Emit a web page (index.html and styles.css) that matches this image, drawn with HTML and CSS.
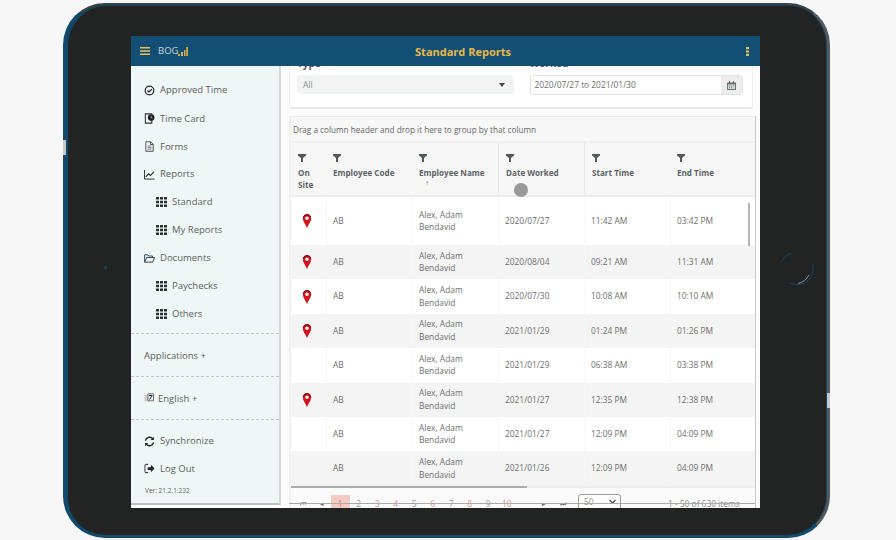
FILE: index.html
```html
<!DOCTYPE html>
<html lang="en">
<head>
<meta charset="utf-8">
<title>Standard Reports</title>
<link rel="stylesheet" href="styles.css">
</head>
<body>
<svg class="defs" width="0" height="0" aria-hidden="true">
  <symbol id="i-th" viewBox="0 0 11 10"><path d="M0 0h3v2.6H0zM4 0h3v2.6H4zM8 0h3v2.6H8zM0 3.7h3v2.6H0zM4 3.7h3v2.6H4zM8 3.7h3v2.6H8zM0 7.4h3V10H0zM4 7.4h3V10H4zM8 7.4h3V10H8z"/></symbol>
  <symbol id="i-funnel" viewBox="0 0 9 9"><path d="M0 0h9v1.8L5.6 4.4V9H3.4V4.4L0 1.8z"/></symbol>
  <symbol id="i-pin" viewBox="0 0 10 14"><path fill-rule="evenodd" fill="#d0131c" d="M5 0a4.2 4.2 0 0 1 4.2 4.3C9.200 7.500 6.300 10.500 5 14 3.700 10.500 .8 7.500 .8 4.300A4.200 4.200 0 0 1 5 0zm0 2.500a1.800 1.800 0 1 0 0 3.600 1.800 1.800 0 0 0 0-3.600z"/><path fill="none" stroke="#3b1416" stroke-width=".8" d="M1.300 3.400A3.900 3.900 0 0 1 8.700 3.400"/></symbol>
</svg>

<div class="tablet">
  <span class="side-mark side-left"></span>
  <span class="side-mark side-right"></span>
  <span class="camera"></span>
  <svg class="home" width="36" height="36" viewBox="0 0 36 36" aria-hidden="true">
    <path d="M2.500 12A16 16 0 0 1 12 3.500" fill="none" stroke="#12496c" stroke-width="1"/>
    <path d="M33.500 14A16 16 0 0 1 11 33" fill="none" stroke="#12496c" stroke-width="1"/>
    <path d="M30 25A16 16 0 0 1 19 33.500" fill="none" stroke="#8a8f92" stroke-width="1"/>
  </svg>

  <div class="screen">
    <header class="topbar">
      <div class="brand">
        <svg class="burger" width="10" height="8" viewBox="0 0 10 8" aria-hidden="true"><path d="M0 0h10v1.600H0zM0 3.200h10v1.600H0zM0 6.400h10V8H0z"/></svg>
        <span class="brand-name">BOG</span>
        <svg class="brand-bars" width="10" height="9" viewBox="0 0 10 9" aria-hidden="true"><path d="M0 7h2v2H0zM3 5h2v4H3zM6 3h1.500v6H6zM8.300 0H10v9H8.300z"/></svg>
      </div>
      <h1 class="title">Standard Reports</h1>
      <svg class="kebab" width="3" height="9" viewBox="0 0 3 9" aria-hidden="true"><path d="M0 0h3v2.200H0zM0 3.400h3v2.200H0zM0 6.800h3V9H0z"/></svg>
    </header>

    <div class="body">
      <nav class="sidebar">
        <div class="nav-cut"><span>Types</span></div>
        <ul class="nav">
          <li class="nav-row"><svg class="ico" viewBox="0 0 12 12"><circle cx="6" cy="6" r="4.700" fill="none" stroke="#222" stroke-width="1.300"/><path d="M3.800 6l1.600 1.600 3-3" fill="none" stroke="#222" stroke-width="1.300"/></svg>Approved Time</li>
          <li class="nav-row nav-tall"><svg class="ico" viewBox="0 0 12 12"><path d="M1.500 1h7v10h-7z" fill="none" stroke="#333" stroke-width="1.200"/><circle cx="7.800" cy="5" r="3.600" fill="#222"/><path d="M7.800 3.200V5l1.300.8" fill="none" stroke="#fff" stroke-width=".7"/></svg>Time Card</li>
          <li class="nav-row nav-short"><svg class="ico" viewBox="0 0 12 12"><path d="M2 .8h5.200L10 3.600v7.600H2zM7 1v2.800h3" fill="none" stroke="#444" stroke-width="1"/><path d="M4 5.500h4M4 7.200h4M4 8.900h4" stroke="#555" stroke-width=".8"/></svg>Forms</li>
          <li class="nav-row"><svg class="ico" viewBox="0 0 12 12"><path d="M.6 1v10h11" fill="none" stroke="#222" stroke-width="1"/><path d="M2 8.500l3-3.200 2 1.800 3.800-4" fill="none" stroke="#222" stroke-width="1.200"/></svg>Reports</li>
          <li class="nav-row nav-sub"><svg class="ico-th"><use href="#i-th"/></svg>Standard</li>
          <li class="nav-row nav-sub"><svg class="ico-th"><use href="#i-th"/></svg>My Reports</li>
          <li class="nav-row"><svg class="ico" viewBox="0 0 12 12"><path d="M.7 10V2h3.500l1 1.300h4V5" fill="none" stroke="#12496c" stroke-width="1"/><path d="M.8 10l2-5h8.700l-2 5z" fill="none" stroke="#333" stroke-width="1"/></svg>Documents</li>
          <li class="nav-row nav-sub"><svg class="ico-th"><use href="#i-th"/></svg>Paychecks</li>
          <li class="nav-row nav-sub"><svg class="ico-th"><use href="#i-th"/></svg>Others</li>
        </ul>
        <div class="nav-block nav-apps">Applications +</div>
        <div class="nav-block nav-lang"><svg class="ico-lang" viewBox="0 0 10 10"><path d="M.5 1.500h5v7h-5z" fill="#ccc"/><path d="M4 .8h5.500v7H4z" fill="#e8eeee" stroke="#444" stroke-width=".7"/><path d="M5 2.500h3.500M6.700 2v1M5.500 6.500l2.500-3.500" stroke="#123" stroke-width=".9" fill="none"/></svg>English +</div>
        <ul class="nav nav-foot">
          <li class="nav-row"><svg class="ico" viewBox="0 0 12 12"><path d="M1.500 5A4.600 4.600 0 0 1 9.500 3M10.500 7A4.600 4.600 0 0 1 2.500 9" fill="none" stroke="#222" stroke-width="1.500"/><path d="M10.800.8v3.600H7.200zM1.200 11.200V7.600h3.600z" fill="#222"/></svg>Synchronize</li>
          <li class="nav-row nav-short"><svg class="ico" viewBox="0 0 12 12"><path d="M4.500 1.500H2.500A1.500 1.500 0 0 0 1 3v6a1.500 1.500 0 0 0 1.500 1.500h2" fill="none" stroke="#444" stroke-width="1.100"/><path d="M4 4.500h3.500V2L11.500 6 7.500 10V7.500H4z" fill="#222"/></svg>Log Out</li>
        </ul>
        <div class="version">Ver: 21.2.1.232</div>
      </nav>

      <main class="main">
        <section class="filters">
          <div class="field field-type">
            <label class="field-label">Type</label>
            <div class="select"><span>All</span><span class="caret"></span></div>
          </div>
          <div class="field field-date">
            <label class="field-label">Worked</label>
            <div class="date">
              <span class="date-text">2020/07/27 to 2021/01/30</span>
              <span class="date-btn"><svg width="9" height="9" viewBox="0 0 9 9" aria-hidden="true"><path d="M0 1.500h9V9H0z" fill="#6d7478"/><path d="M1 3.500h7V8H1z" fill="#d9dcdd"/><path d="M2 .3h1v2H2zM6 .3h1v2H6z" fill="#444"/><path d="M2 4.500h1v1H2zM4 4.500h1v1H4zM6 4.500h1v1H6zM2 6.300h1v1H2zM4 6.300h1v1H4z" fill="#6d7478"/></svg></span>
            </div>
          </div>
        </section>

        <section class="grid">
          <div class="group-panel">Drag a column header and drop it here to group by that column</div>
          <div class="head row-cols">
            <div class="hcell"><svg class="funnel"><use href="#i-funnel"/></svg><span>On<br>Site</span></div>
            <div class="hcell"><svg class="funnel"><use href="#i-funnel"/></svg><span>Employee Code</span></div>
            <div class="hcell"><svg class="funnel"><use href="#i-funnel"/></svg><span>Employee Name</span><span class="sort">↑</span></div>
            <div class="hcell hcell-line"><svg class="funnel"><use href="#i-funnel"/></svg><span>Date Worked</span></div>
            <div class="hcell hcell-line"><svg class="funnel"><use href="#i-funnel"/></svg><span>Start Time</span></div>
            <div class="hcell"><svg class="funnel"><use href="#i-funnel"/></svg><span>End Time</span></div>
          </div>
          <div class="rows">
            <div class="row row-cols row-first"><div class="cell cell-pin"><svg class="pin"><use href="#i-pin"/></svg></div><div class="cell">AB</div><div class="cell">Alex, Adam<br>Bendavid</div><div class="cell">2020/07/27</div><div class="cell">11:42 AM</div><div class="cell">03:42 PM</div></div>
            <div class="row row-cols row-alt"><div class="cell cell-pin"><svg class="pin"><use href="#i-pin"/></svg></div><div class="cell">AB</div><div class="cell">Alex, Adam<br>Bendavid</div><div class="cell">2020/08/04</div><div class="cell">09:21 AM</div><div class="cell">11:31 AM</div></div>
            <div class="row row-cols"><div class="cell cell-pin"><svg class="pin"><use href="#i-pin"/></svg></div><div class="cell">AB</div><div class="cell">Alex, Adam<br>Bendavid</div><div class="cell">2020/07/30</div><div class="cell">10:08 AM</div><div class="cell">10:10 AM</div></div>
            <div class="row row-cols row-alt"><div class="cell cell-pin"><svg class="pin"><use href="#i-pin"/></svg></div><div class="cell">AB</div><div class="cell">Alex, Adam<br>Bendavid</div><div class="cell">2021/01/29</div><div class="cell">01:24 PM</div><div class="cell">01:26 PM</div></div>
            <div class="row row-cols"><div class="cell cell-pin"></div><div class="cell">AB</div><div class="cell">Alex, Adam<br>Bendavid</div><div class="cell">2021/01/29</div><div class="cell">06:38 AM</div><div class="cell">03:38 PM</div></div>
            <div class="row row-cols row-alt"><div class="cell cell-pin"><svg class="pin"><use href="#i-pin"/></svg></div><div class="cell">AB</div><div class="cell">Alex, Adam<br>Bendavid</div><div class="cell">2021/01/27</div><div class="cell">12:35 PM</div><div class="cell">12:38 PM</div></div>
            <div class="row row-cols"><div class="cell cell-pin"></div><div class="cell">AB</div><div class="cell">Alex, Adam<br>Bendavid</div><div class="cell">2021/01/27</div><div class="cell">12:09 PM</div><div class="cell">04:09 PM</div></div>
            <div class="row row-cols row-alt"><div class="cell cell-pin"></div><div class="cell">AB</div><div class="cell">Alex, Adam<br>Bendavid</div><div class="cell">2021/01/26</div><div class="cell">12:09 PM</div><div class="cell">04:09 PM</div></div>
            <span class="vthumb"></span>
          </div>
          <div class="hscroll"><span class="hthumb"></span></div>
          <div class="pager">
            <div class="pager-nav">
              <span class="pg-arrow">⏮</span><span class="pg-arrow">◂</span>
              <span class="pg pg-on">1</span><span class="pg">2</span><span class="pg pg-r">3</span><span class="pg pg-r">4</span><span class="pg">5</span><span class="pg pg-r">6</span><span class="pg">7</span><span class="pg pg-r">8</span><span class="pg">9</span><span class="pg pg-r">10</span>
              <span class="pg-arrow pg-next">▸</span><span class="pg-arrow">⏭</span>
            </div>
            <div class="pg-size"><span>50</span><svg width="7" height="5" viewBox="0 0 7 5" aria-hidden="true"><path d="M.5 .8L3.500 4 6.500 .8" fill="none" stroke="#444" stroke-width="1.200"/></svg></div>
            <div class="pg-info">1 - 50 of 630 items</div>
          </div>
          <span class="bottom-line"></span>
        </section>
        <span class="touch"></span>
      </main>
    </div>
  </div>
</div>
</body>
</html>
```

FILE: styles.css
```css
* { box-sizing: border-box; }
html, body { margin: 0; padding: 0; height: 100%; }
body {
  background: #f7f7f7;
  overflow: hidden;
  font-family: "Open Sans", "Liberation Sans", sans-serif;
  color: #555;
}
.defs { position: absolute; }

/* device */
.tablet {
  position: relative;
  width: 767px;
  height: 535px;
  margin: 3px 0 0 63px;
  padding: 31px 68px 28px 64px;
  background: #222423;
  border-style: solid;
  border-width: 2px 3px 3px 4px;
  border-color: #3a4247 #555a5c #12496c #12496c;
  border-radius: 42px;
  box-shadow: inset -1px 0 0 #12496c, inset 1px 1px 0 #12496c;
}
.side-mark { position: absolute; width: 3px; height: 15px; background: #c8c8c8; }
.side-left { left: -4px; top: 135px; }
.side-right { right: -3px; top: 388px; }
.camera { position: absolute; left: 37px; top: 261px; width: 3px; height: 3px; border-radius: 50%; background: #12496c; }
.home { position: absolute; left: 712px; top: 245px; }

.screen {
  width: 629px;
  height: 472px;
  background: #fff;
  display: flex;
  flex-direction: column;
  overflow: hidden;
}

/* top bar */
.topbar {
  position: relative;
  flex: 0 0 30px;
  display: flex;
  align-items: center;
  justify-content: space-between;
  padding: 0 11px 0 9px;
  background: #134e74;
  z-index: 2;
}
.brand { display: flex; align-items: center; }
.burger { fill: #e6c05c; margin-right: 8px; }
.brand-name { color: #cfd6d2; font-size: 9.500px; line-height: 12px; }
.brand-bars { fill: #d7ae4c; }
.title {
  position: absolute;
  left: 35px; right: 0;
  margin: 0;
  text-align: center;
  font-size: 11px;
  font-weight: 700;
  color: #e9b949;
  pointer-events: none;
}
.kebab { fill: #e6c05c; }

.body { flex: 1; display: flex; min-height: 0; }

/* sidebar */
.sidebar {
  flex: 0 0 150px;
  position: relative;
  margin-bottom: 3px;
  background: #eff6f6;
  border-right: 2px solid #d5d8d8;
  border-bottom: 2px solid #bcbfbf;
  font-size: 9.500px;
  color: #5b5f61;
  overflow: hidden;
}
.nav-cut { height: 10px; overflow: hidden; padding-left: 29px; }
.nav-cut span { display: block; margin-top: -13px; line-height: 14px; }
.nav { list-style: none; margin: 0; padding: 0; }
.nav-row { display: flex; align-items: center; height: 28px; padding-left: 13px; line-height: 14px; }
.nav-tall { height: 29px; }
.nav-short { height: 27px; }
.nav-sub { padding-left: 25px; }
.ico { width: 11px; height: 11px; margin-right: 5px; flex: none; }
.ico-th { width: 11px; height: 10px; margin-right: 5px; fill: #2c2f31; flex: none; }
.nav-block {
  display: flex;
  align-items: center;
  height: 43px;
  padding-left: 13px;
  border-top: 1px dashed #c4c7c7;
}
.nav-apps { margin-top: 5px; }
.ico-lang { width: 10px; height: 10px; margin-right: 4px; }
.nav-foot { border-top: 1px dashed #c4c7c7; padding-top: 7px; }
.version { padding: 1px 0 0 14px; font-size: 6.500px; line-height: 16px; color: #666; }

/* main */
.main { flex: 1; position: relative; min-width: 0; padding-left: 8px; background: #fcfcfc; overflow: hidden; }
.filters {
  display: flex;
  gap: 16px;
  width: 464px;
  height: 63px;
  margin-top: -20px;
  padding: 9px 9px 0 7px;
  background: #fff;
  border: 1px solid #eee;
  border-bottom: 2px solid #e9e9e9;
  border-radius: 3px;
}
.field { display: flex; flex-direction: column; }
.field-type { width: 217px; }
.field-date { width: 214px; }
.field-label { height: 19px; font-size: 10px; line-height: 14px; font-weight: 700; color: #555; }
.select {
  display: flex;
  justify-content: space-between;
  align-items: center;
  height: 19px;
  padding: 0 9px 0 6px;
  background: #f2f3f3;
  border-radius: 4px;
  font-size: 8.500px;
  color: #8b8b8b;
}
.caret { width: 0; height: 0; border: 3px solid transparent; border-top: 4px solid #444; border-bottom: 0; }
.date {
  display: flex;
  align-items: stretch;
  height: 20px;
  background: #fff;
  border: 1px solid #e2e2e2;
  border-radius: 3px;
  font-size: 8.400px;
  color: #6d6d6d;
  overflow: hidden;
}
.date-text { flex: 1; padding-left: 4px; line-height: 18px; }
.date-btn { flex: 0 0 21px; display: flex; align-items: center; justify-content: center; background: #ececec; }

/* data grid */
.grid {
  position: relative;
  width: 467px;
  height: 392px;
  margin-top: 7px;
  background: #fafafa;
  border-left: 2px solid #f0f0f0;
  border-right: 1px solid #c9c9c9;
  font-size: 8.400px;
  color: #666;
}
.group-panel { height: 27px; padding-left: 2px; line-height: 25px; font-size: 8.200px; border-bottom: 2px solid #f0f0f0; border-top: 1px solid #ececec; background: #f7f7f7; color: #666; }
.row-cols { display: grid; grid-template-columns: 35px 86px 86px 86px 86px 1fr; }
.head { height: 54px; background: #f6f6f6; border-bottom: 2px solid #ececec; }
.hcell {
  display: flex;
  flex-direction: column;
  align-items: flex-start;
  padding: 11px 0 0 7px;
  line-height: 12px;
  font-size: 8.100px;
  font-weight: 700;
  color: #5d6366;
}
.hcell-line { border-left: 1px solid #e6e6e6; }
.funnel { width: 8px; height: 8px; margin-bottom: 5px; fill: #50585c; }
.sort { font-size: 8px; line-height: 8px; font-weight: 400; padding-left: 6px; color: #8a7474; }
.rows { position: relative; }
.row { height: 34.400px; background: #fff; }
.row-first { height: 48px; }
.row-alt { background: #f4f4f4; }
.cell {
  display: flex;
  align-items: center;
  padding-left: 6px;
  line-height: 12.500px;
  border-left: 1px solid #f6f6f6;
  color: #6e6e6e;
}
.cell-pin { border-left: 0; padding-left: 11px; }
.pin { width: 10px; height: 14px; }
.vthumb { position: absolute; right: 5px; top: 6px; width: 2px; height: 43px; background: #b5b5b5; }
.hscroll { height: 2px; background: #ececec; }
.hthumb { display: block; width: 236px; height: 2px; background: #a9adad; }
.pager { position: relative; display: flex; align-items: flex-start; height: 22px; overflow: hidden; padding: 7px 0 0 2px; background: #fafafa; color: #8d8d8d; }
.pager-nav { display: flex; align-items: center; width: 285px; }
.pg { width: 18.500px; height: 18px; line-height: 18px; text-align: center; color: #999; flex: none; }
.pg-r { color: #d98f8f; }
.pg-on { background: #f6c9c3; color: #d97a6c; }
.pg-arrow { width: 19px; height: 18px; line-height: 18px; text-align: center; font-size: 7px; color: #5d6366; flex: none; }
.pg-next { margin-left: 18px; }
.pg-size {
  display: flex;
  align-items: center;
  justify-content: space-between;
  width: 43px;
  height: 24px;
  margin-top: -1px;
  padding: 0 4px 8px 5px;
  border: 1px solid #9b9b9b;
  border-radius: 3px;
  background: #fff;
}
.pg-info { margin-left: 47px; line-height: 18px; white-space: nowrap; }
.bottom-line { position: absolute; left: -2px; right: 0; bottom: 4px; height: 1px; background: #a9abab; }
.touch { position: absolute; left: 233px; top: 117px; width: 14px; height: 14px; border-radius: 50%; background: #999; }
```
